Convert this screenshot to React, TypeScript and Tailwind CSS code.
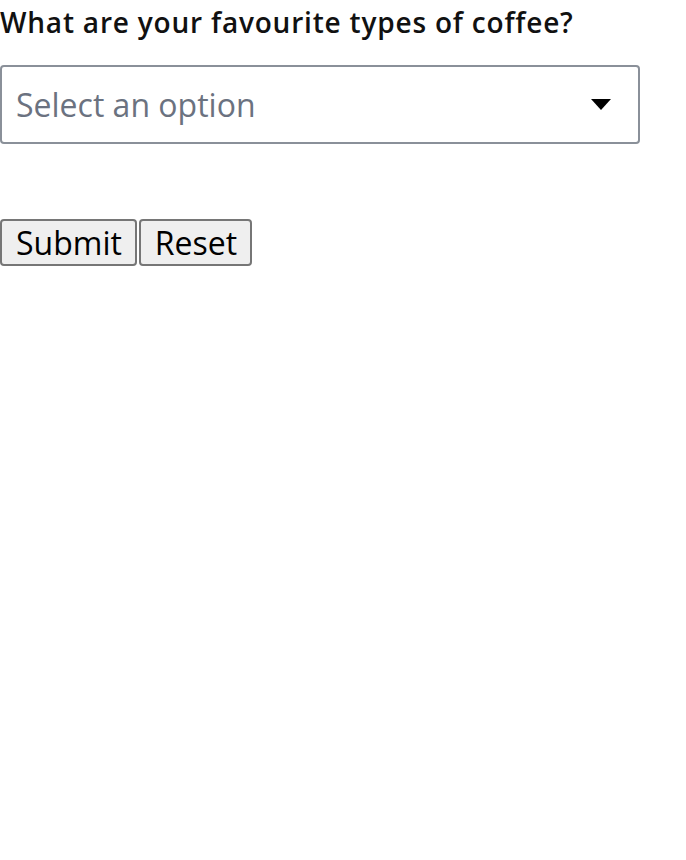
import React from "react";

export default function App() {
  return (
    <div className="bg-white" style={{ fontFamily: '"Open Sans", sans-serif' }}>
      <label className="block -mt-[2px] text-[28px] font-semibold leading-[48px] tracking-[0.8px] text-[#111]">
        What are your favourite types of coffee?
      </label>
      <div className="mt-[19px] w-[640px] h-[79px] border-2 border-[#8a9099] rounded-[4px] flex items-center justify-between pl-[14px] pr-[27px]">
        <span className="text-[32px] text-[#6b7280]">Select an option</span>
        <svg width="20" height="11" viewBox="0 0 20 11">
          <polygon points="0,0 20,0 10,11" fill="#000" />
        </svg>
      </div>
      <div className="mt-[75px] flex gap-[2px]">
        <button className="h-[47px] pl-[14px] pr-[13px] text-[32px] leading-none text-black bg-[#efefef] border-2 border-[#767676] rounded-[4px]">
          Submit
        </button>
        <button className="h-[47px] pl-[14px] pr-[13px] text-[32px] leading-none text-black bg-[#efefef] border-2 border-[#767676] rounded-[4px]">
          Reset
        </button>
      </div>
    </div>
  );
}
